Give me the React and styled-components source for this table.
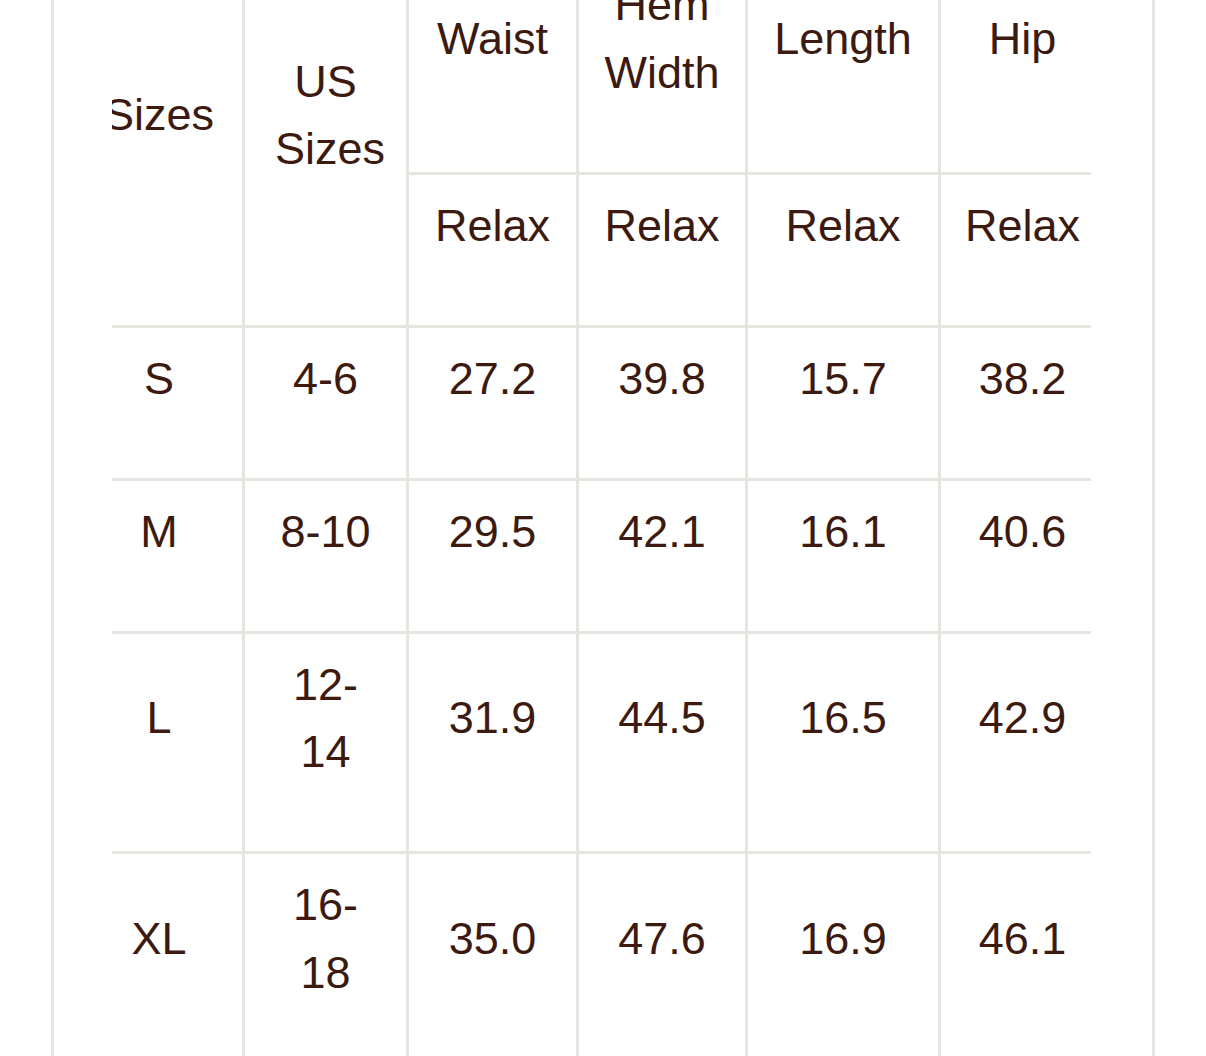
import React from "react";
import styled, { createGlobalStyle } from "styled-components";

const GlobalStyle = createGlobalStyle`
  html, body {
    margin: 0;
    padding: 0;
    background: #ffffff;
  }
  body {
    font-family: "Liberation Sans", Arial, Helvetica, sans-serif;
    color: #3c1a10;
  }
`;

const Frame = styled.div`
  margin: 0 51px;
  min-height: 1200px;
  border-left: 3px solid #e6e5e0;
  border-right: 3px solid #e6e5e0;
  padding: 0 61px 0 58px;
`;

const ScrollArea = styled.div`
  overflow: hidden;
  margin-top: -49px;
`;

const Table = styled.table`
  table-layout: fixed;
  width: 1034px;
  margin-left: -39px;
  border-collapse: separate;
  border-spacing: 0;
  border-left: 3px solid #e6e5e0;
  border-top: 3px solid #e6e5e0;
  font-size: 45px;
  line-height: 67.5px;
`;

const Cell = styled.td`
  box-sizing: border-box;
  border-right: 3px solid #e6e5e0;
  border-bottom: 3px solid #e6e5e0;
  padding: 17px ${(p) => (p.$narrow ? 30 : 22)}px 65.5px;
  text-align: center;
  vertical-align: middle;
  font-weight: normal;
  color: #3c1a10;
  overflow-wrap: normal;
`;

const HeadCell = styled(Cell).attrs({ as: "th" })``;

const widths = [169, 164, 170, 169, 193, 166];

const rows = [
  ["S", "4-6", "27.2", "39.8", "15.7", "38.2"],
  ["M", "8-10", "29.5", "42.1", "16.1", "40.6"],
  ["L", "12-14", "31.9", "44.5", "16.5", "42.9"],
  ["XL", "16-18", "35.0", "47.6", "16.9", "46.1"],
];

const measures = ["Waist", "Hem Width", "Length", "Hip"];

export default function App() {
  return (
    <>
      <GlobalStyle />
      <Frame>
        <ScrollArea>
          <Table>
            <colgroup>
              {widths.map((w, i) => (
                <col key={i} style={{ width: w }} />
              ))}
            </colgroup>
            <thead>
              <tr>
                <HeadCell rowSpan={2}>Sizes</HeadCell>
                <HeadCell rowSpan={2} $narrow>
                  US Sizes
                </HeadCell>
                {measures.map((m) => (
                  <HeadCell key={m}>{m}</HeadCell>
                ))}
              </tr>
              <tr>
                {measures.map((m) => (
                  <HeadCell key={m}>Relax</HeadCell>
                ))}
              </tr>
            </thead>
            <tbody>
              {rows.map((r) => (
                <tr key={r[0]}>
                  {r.map((v, i) => (
                    <Cell key={i} $narrow={i === 1}>
                      {v}
                    </Cell>
                  ))}
                </tr>
              ))}
            </tbody>
          </Table>
        </ScrollArea>
      </Frame>
    </>
  );
}
